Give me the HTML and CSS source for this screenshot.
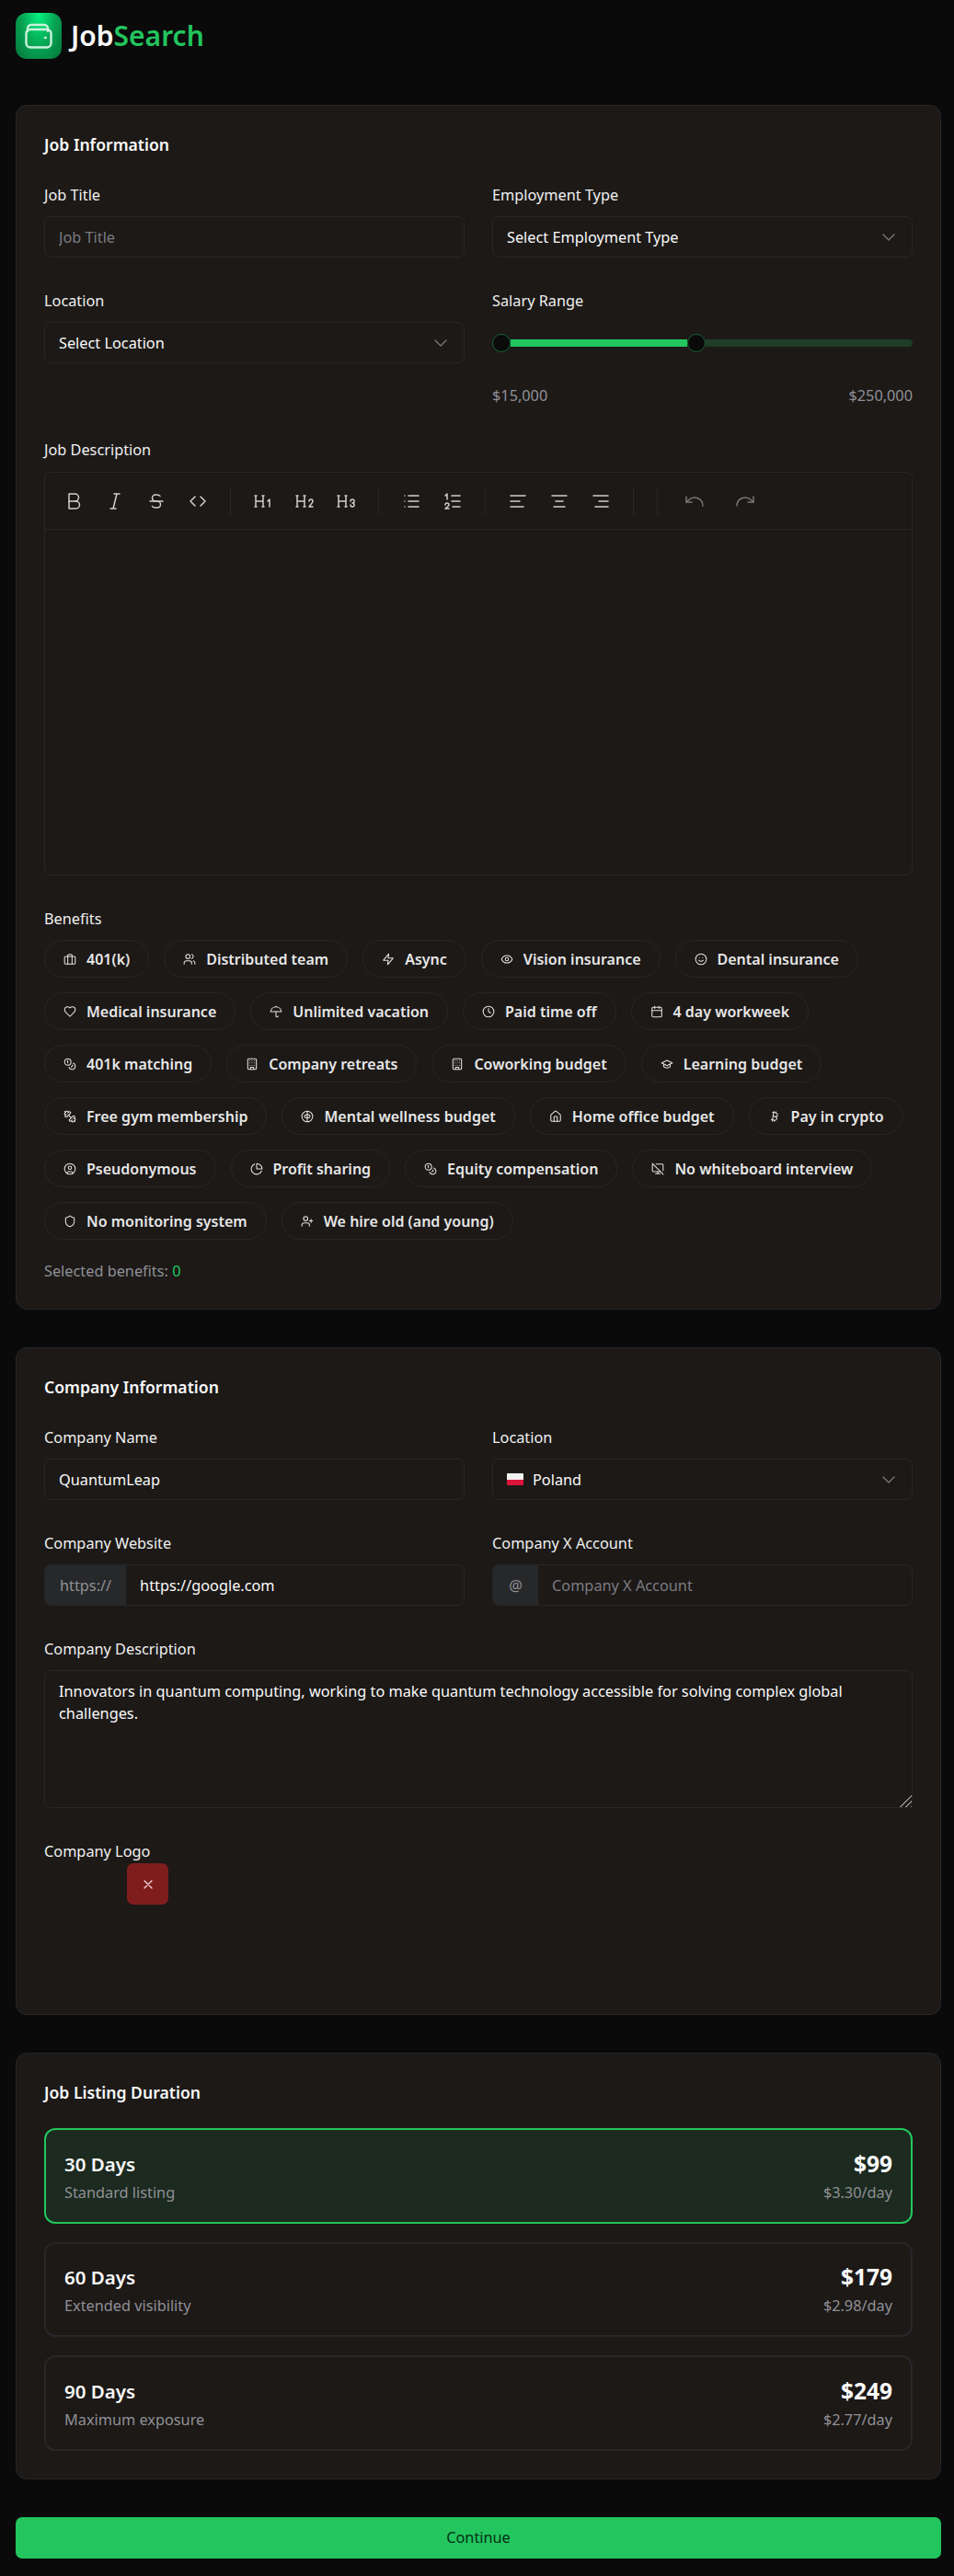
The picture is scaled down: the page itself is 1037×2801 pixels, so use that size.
FILE: index.html
```html
<!DOCTYPE html>
<html>
<head>
    <meta charset="UTF-8">
    <title>JobSearch - Post a job</title>
    <link rel="stylesheet" href="styles.css">
</head>
<body>
    <svg class="sprite" xmlns="http://www.w3.org/2000/svg">
        <symbol id="i-briefcase" viewBox="0 0 24 24"><rect x="2" y="7" width="20" height="14" rx="2"/><path d="M16 21V5a2 2 0 0 0-2-2h-4a2 2 0 0 0-2 2v16"/></symbol>
        <symbol id="i-users" viewBox="0 0 24 24"><path d="M16 21v-2a4 4 0 0 0-4-4H6a4 4 0 0 0-4 4v2"/><circle cx="9" cy="7" r="4"/><path d="M22 21v-2a4 4 0 0 0-3-3.87"/><path d="M16 3.13a4 4 0 0 1 0 7.75"/></symbol>
        <symbol id="i-zap" viewBox="0 0 24 24"><path d="M13 2 3 14h9l-1 8 10-12h-9z"/></symbol>
        <symbol id="i-eye" viewBox="0 0 24 24"><path d="M2 12s3-7 10-7 10 7 10 7-3 7-10 7-10-7-10-7Z"/><circle cx="12" cy="12" r="3"/></symbol>
        <symbol id="i-smile" viewBox="0 0 24 24"><circle cx="12" cy="12" r="10"/><path d="M8 14s1.5 2 4 2 4-2 4-2"/><path d="M9 9h.01M15 9h.01"/></symbol>
        <symbol id="i-heart" viewBox="0 0 24 24"><path d="M19 14c1.49-1.46 3-3.21 3-5.5A5.5 5.5 0 0 0 16.5 3c-1.76 0-3 .5-4.5 2-1.5-1.5-2.74-2-4.5-2A5.5 5.5 0 0 0 2 8.5c0 2.3 1.5 4.05 3 5.5l7 7Z"/></symbol>
        <symbol id="i-umbrella" viewBox="0 0 24 24"><path d="M22 12a10.06 10.06 1 0 0-20 0Z"/><path d="M12 12v8a2 2 0 0 0 4 0"/><path d="M12 2v1"/></symbol>
        <symbol id="i-clock" viewBox="0 0 24 24"><circle cx="12" cy="12" r="10"/><path d="M12 6v6l4 2"/></symbol>
        <symbol id="i-calendar" viewBox="0 0 24 24"><rect x="3" y="4" width="18" height="18" rx="2"/><path d="M16 2v4M8 2v4M3 10h18"/></symbol>
        <symbol id="i-coins" viewBox="0 0 24 24"><circle cx="8" cy="8" r="6"/><path d="M18.09 10.37A6 6 0 1 1 10.34 18"/><path d="M7 6h1v4"/><path d="m16.71 13.88.7.71-2.82 2.82"/></symbol>
        <symbol id="i-building" viewBox="0 0 24 24"><rect x="4" y="2" width="16" height="20" rx="2"/><path d="M9 22v-4h6v4"/><path d="M8 6h.01M12 6h.01M16 6h.01M8 10h.01M12 10h.01M16 10h.01M8 14h.01M12 14h.01M16 14h.01"/></symbol>
        <symbol id="i-cap" viewBox="0 0 24 24"><path d="M22 10 12 5 2 10l10 5z"/><path d="M6 12v5c3 3 9 3 12 0v-5"/></symbol>
        <symbol id="i-dumbbell" viewBox="0 0 24 24"><path d="M14.4 14.4 9.6 9.6"/><path d="M18.657 21.485a2 2 0 1 1-2.829-2.828l-1.767 1.768a2 2 0 1 1-2.829-2.829l6.364-6.364a2 2 0 1 1 2.829 2.829l-1.768 1.767a2 2 0 1 1 2.828 2.829z"/><path d="m21.5 21.5-1.4-1.4"/><path d="M3.9 3.9 2.5 2.5"/><path d="M6.404 12.768a2 2 0 1 1-2.829-2.829l1.768-1.767a2 2 0 1 1-2.828-2.829l2.828-2.828a2 2 0 1 1 2.829 2.828l1.767-1.768a2 2 0 1 1 2.829 2.829z"/></symbol>
        <symbol id="i-brain" viewBox="0 0 24 24"><circle cx="12" cy="12" r="10"/><path d="M12 2v20"/><path d="M12 9c-3-1-5 1-5 3s2 3 5 2"/><path d="M12 9c3-1 5 1 5 3s-2 3-5 2"/></symbol>
        <symbol id="i-home" viewBox="0 0 24 24"><path d="M15 21v-8a1 1 0 0 0-1-1h-4a1 1 0 0 0-1 1v8"/><path d="M3 10a2 2 0 0 1 .709-1.528l7-5.999a2 2 0 0 1 2.582 0l7 5.999A2 2 0 0 1 21 10v9a2 2 0 0 1-2 2H5a2 2 0 0 1-2-2z"/></symbol>
        <symbol id="i-bitcoin" viewBox="0 0 24 24"><path d="M11.767 19.089c4.924.868 6.14-6.025 1.216-6.894m-1.216 6.894L5.86 18.047m5.908 1.042-.347 1.97m1.563-8.864c4.924.869 6.14-6.025 1.215-6.893m-1.215 6.893-3.94-.694m5.155-6.2L8.29 4.26m5.908 1.042.348-1.97M7.48 20.364l3.126-17.727"/></symbol>
        <symbol id="i-user-circle" viewBox="0 0 24 24"><circle cx="12" cy="12" r="10"/><circle cx="12" cy="10" r="3"/><path d="M7 20.662V19a2 2 0 0 1 2-2h6a2 2 0 0 1 2 2v1.662"/></symbol>
        <symbol id="i-pie" viewBox="0 0 24 24"><path d="M21.21 15.89A10 10 0 1 1 8 2.83"/><path d="M22 12A10 10 0 0 0 12 2v10z"/></symbol>
        <symbol id="i-monitor-off" viewBox="0 0 24 24"><path d="M17 17H4a2 2 0 0 1-2-2V5c0-1.5 1-2 1-2"/><path d="M22 15V5a2 2 0 0 0-2-2H9"/><path d="M8 21h8M12 17v4"/><path d="m2 2 20 20"/></symbol>
        <symbol id="i-shield" viewBox="0 0 24 24"><path d="M20 13c0 5-3.500 7.500-7.660 8.950a1 1 0 0 1-.67-.01C7.500 20.500 4 18 4 13V6a1 1 0 0 1 1-1c2 0 4.500-1.200 6.240-2.720a1.170 1.170 0 0 1 1.520 0C14.510 3.810 17 5 19 5a1 1 0 0 1 1 1z"/></symbol>
        <symbol id="i-user-plus" viewBox="0 0 24 24"><path d="M16 21v-2a4 4 0 0 0-4-4H6a4 4 0 0 0-4 4v2"/><circle cx="9" cy="7" r="4"/><path d="M19 8v6M22 11h-6"/></symbol>
        <symbol id="i-chevron" viewBox="0 0 24 24"><path d="m6 9 6 6 6-6"/></symbol>
    </svg>

    <header class="brand">
        <div class="brand-logo">
            <svg viewBox="0 0 30 28" fill="none" stroke="currentColor" stroke-width="2.4" stroke-linecap="round" stroke-linejoin="round"><path d="M3 9V6a4 4 0 0 1 4-4h14a4 4 0 0 1 4 4v3"/><rect x="1.500" y="7" width="27" height="19.500" rx="4.500"/><path d="M22 16h.8"/></svg>
        </div>
        <div class="brand-name">Job<span class="brand-accent">Search</span></div>
    </header>

    <section class="card">
        <h2 class="card-title">Job Information</h2>
        <div class="form-grid">
            <div class="field">
                <label class="field-label">Job Title</label>
                <input class="input" type="text" placeholder="Job Title">
            </div>
            <div class="field">
                <label class="field-label">Employment Type</label>
                <div class="select">
                    <span>Select Employment Type</span>
                    <svg class="chevron"><use href="#i-chevron"/></svg>
                </div>
            </div>
            <div class="field">
                <label class="field-label">Location</label>
                <div class="select">
                    <span>Select Location</span>
                    <svg class="chevron"><use href="#i-chevron"/></svg>
                </div>
            </div>
            <div class="field">
                <label class="field-label">Salary Range</label>
                <div class="slider">
                    <span class="slider-thumb"></span>
                    <span class="slider-fill"></span>
                    <span class="slider-thumb"></span>
                    <span class="slider-rest"></span>
                </div>
                <div class="slider-values">
                    <span>$15,000</span>
                    <span>$250,000</span>
                </div>
            </div>
            <div class="field field-wide">
                <label class="field-label field-label-editor">Job Description</label>
                <div class="editor">
                    <div class="toolbar">
                        <div class="tool-group">
                            <svg class="tool" viewBox="0 0 24 24"><path d="M7 4h6.500a4 4 0 0 1 0 8H7z"/><path d="M13.500 12h1a4 4 0 0 1 0 8H7v-8"/></svg>
                            <svg class="tool" viewBox="0 0 24 24"><path d="M11 4h6M7 20h6M14 4l-4 16"/></svg>
                            <svg class="tool" viewBox="0 0 24 24"><path d="M5 12h14"/><path d="M16 6.500A4 2 0 0 0 12 5h-1a3.500 3.500 0 0 0 0 7h2a3.500 3.500 0 0 1 0 7h-1.500a4 2 0 0 1-4-1.500"/></svg>
                            <svg class="tool" viewBox="0 0 24 24"><path d="m9 7-5 5 5 5M15 7l5 5-5 5"/></svg>
                        </div>
                        <div class="tool-group">
                            <svg class="tool" viewBox="0 0 24 24"><path d="M19 18v-8l-2 2M4 6v12M12 6v12M11 18h2M3 18h2M4 12h8M3 6h2M11 6h2"/></svg>
                            <svg class="tool" viewBox="0 0 24 24"><path d="M17 12a2 2 0 1 1 4 0c0 .591-.417 1.318-.816 1.858L17 18h4M4 6v12M12 6v12M11 18h2M3 18h2M4 12h8M3 6h2M11 6h2"/></svg>
                            <svg class="tool" viewBox="0 0 24 24"><path d="M19 14a2 2 0 1 0-2-2M17 16a2 2 0 1 0 2-2M4 6v12M12 6v12M11 18h2M3 18h2M4 12h8M3 6h2M11 6h2"/></svg>
                        </div>
                        <div class="tool-group">
                            <svg class="tool" viewBox="0 0 24 24"><path d="M9 6h11M9 12h11M9 18h11M5 6v.01M5 12v.01M5 18v.01"/></svg>
                            <svg class="tool" viewBox="0 0 24 24"><path d="M11 6h9M11 12h9M12 18h8M4 16a2 2 0 1 1 4 0c0 .591-.5 1-1 1.500L4 20h4M6 10V4L4 6"/></svg>
                        </div>
                        <div class="tool-group">
                            <svg class="tool" viewBox="0 0 24 24"><path d="M4 6h16M4 12h10M4 18h14"/></svg>
                            <svg class="tool" viewBox="0 0 24 24"><path d="M4 6h16M8 12h8M6 18h12"/></svg>
                            <svg class="tool" viewBox="0 0 24 24"><path d="M4 6h16M10 12h10M6 18h14"/></svg>
                        </div>
                        <div class="tool-group tool-group-empty"></div>
                        <div class="tool-group tool-group-history">
                            <svg class="tool tool-muted" viewBox="0 0 24 24"><path d="M3 7v6h6"/><path d="M21 17a9 9 0 0 0-15-6.700L3 13"/></svg>
                            <svg class="tool tool-muted" viewBox="0 0 24 24"><path d="M21 7v6h-6"/><path d="M3 17a9 9 0 0 1 15-6.700L21 13"/></svg>
                        </div>
                    </div>
                    <div class="editor-body"></div>
                </div>
            </div>
            <div class="field field-wide">
                <label class="field-label">Benefits</label>
                <div class="chips">
                    <div class="chip"><svg><use href="#i-briefcase"/></svg>401(k)</div>
                    <div class="chip"><svg><use href="#i-users"/></svg>Distributed team</div>
                    <div class="chip"><svg><use href="#i-zap"/></svg>Async</div>
                    <div class="chip"><svg><use href="#i-eye"/></svg>Vision insurance</div>
                    <div class="chip"><svg><use href="#i-smile"/></svg>Dental insurance</div>
                    <div class="chip"><svg><use href="#i-heart"/></svg>Medical insurance</div>
                    <div class="chip"><svg><use href="#i-umbrella"/></svg>Unlimited vacation</div>
                    <div class="chip"><svg><use href="#i-clock"/></svg>Paid time off</div>
                    <div class="chip"><svg><use href="#i-calendar"/></svg>4 day workweek</div>
                    <div class="chip"><svg><use href="#i-coins"/></svg>401k matching</div>
                    <div class="chip"><svg><use href="#i-building"/></svg>Company retreats</div>
                    <div class="chip"><svg><use href="#i-building"/></svg>Coworking budget</div>
                    <div class="chip"><svg><use href="#i-cap"/></svg>Learning budget</div>
                    <div class="chip"><svg><use href="#i-dumbbell"/></svg>Free gym membership</div>
                    <div class="chip"><svg><use href="#i-brain"/></svg>Mental wellness budget</div>
                    <div class="chip"><svg><use href="#i-home"/></svg>Home office budget</div>
                    <div class="chip"><svg><use href="#i-bitcoin"/></svg>Pay in crypto</div>
                    <div class="chip"><svg><use href="#i-user-circle"/></svg>Pseudonymous</div>
                    <div class="chip"><svg><use href="#i-pie"/></svg>Profit sharing</div>
                    <div class="chip"><svg><use href="#i-coins"/></svg>Equity compensation</div>
                    <div class="chip"><svg><use href="#i-monitor-off"/></svg>No whiteboard interview</div>
                    <div class="chip"><svg><use href="#i-shield"/></svg>No monitoring system</div>
                    <div class="chip"><svg><use href="#i-user-plus"/></svg>We hire old (and young)</div>
                </div>
                <p class="chips-count">Selected benefits: <span class="chips-count-value">0</span></p>
            </div>
        </div>
    </section>

    <section class="card">
        <h2 class="card-title">Company Information</h2>
        <div class="form-grid">
            <div class="field">
                <label class="field-label">Company Name</label>
                <input class="input" type="text" value="QuantumLeap">
            </div>
            <div class="field">
                <label class="field-label">Location</label>
                <div class="select">
                    <span class="select-flag">
                        <span class="flag"><span class="flag-white"></span><span class="flag-red"></span></span>
                        Poland
                    </span>
                    <svg class="chevron"><use href="#i-chevron"/></svg>
                </div>
            </div>
            <div class="field">
                <label class="field-label">Company Website</label>
                <div class="input-group">
                    <span class="addon">https://</span>
                    <input class="input-bare" type="text" value="https://google.com">
                </div>
            </div>
            <div class="field">
                <label class="field-label">Company X Account</label>
                <div class="input-group">
                    <span class="addon">@</span>
                    <input class="input-bare" type="text" placeholder="Company X Account">
                </div>
            </div>
            <div class="field field-wide">
                <label class="field-label">Company Description</label>
                <textarea class="textarea">Innovators in quantum computing, working to make quantum technology accessible for solving complex global challenges.</textarea>
            </div>
            <div class="field field-wide">
                <label class="field-label field-label-tight">Company Logo</label>
                <div class="logo-preview">
                    <button class="logo-remove" type="button">
                        <svg viewBox="0 0 24 24"><path d="M18 6 6 18M6 6l12 12"/></svg>
                    </button>
                </div>
            </div>
        </div>
    </section>

    <section class="card">
        <h2 class="card-title card-title-tight">Job Listing Duration</h2>
        <div class="plans">
            <div class="plan plan-active">
                <div>
                    <div class="plan-name">30 Days</div>
                    <div class="plan-note">Standard listing</div>
                </div>
                <div class="plan-price">
                    <div class="plan-amount">$99</div>
                    <div class="plan-note">$3.30/day</div>
                </div>
            </div>
            <div class="plan">
                <div>
                    <div class="plan-name">60 Days</div>
                    <div class="plan-note">Extended visibility</div>
                </div>
                <div class="plan-price">
                    <div class="plan-amount">$179</div>
                    <div class="plan-note">$2.98/day</div>
                </div>
            </div>
            <div class="plan">
                <div>
                    <div class="plan-name">90 Days</div>
                    <div class="plan-note">Maximum exposure</div>
                </div>
                <div class="plan-price">
                    <div class="plan-amount">$249</div>
                    <div class="plan-note">$2.77/day</div>
                </div>
            </div>
        </div>
    </section>

    <button class="continue" type="button">Continue</button>
</body>
</html>
```

FILE: styles.css
```css
* {
  box-sizing: border-box;
}

html {
  color-scheme: dark;
}

body {
  margin: 0;
  padding: 14px 14px 19px 17px;
  background-color: #0a0a0a;
  color: #fafafa;
  font-family: "Noto Sans", sans-serif;
  font-size: 16.3px;
  line-height: 24px;
}

.sprite {
  display: none;
}

/* header */
.brand {
  display: flex;
  align-items: center;
  gap: 10px;
  margin-bottom: 50px;
}

.brand-logo {
  display: flex;
  align-items: center;
  justify-content: center;
  width: 50px;
  height: 50px;
  border-radius: 12px;
  background: radial-gradient(ellipse at 50% 0%, #05f582 0%, #07a654 50%, #04753b 100%);
  color: #c9f2dc;
}

.brand-logo svg {
  width: 30px;
  height: 28px;
}

.brand-name {
  font-size: 30px;
  font-weight: 600;
  line-height: 36px;
}

.brand-accent {
  color: #22c55e;
}

/* cards */
.card {
  margin-bottom: 41px;
  padding: 30px;
  background-color: #1c1917;
  border: 1px solid #27272a;
  border-radius: 12px;
}

.card-title {
  margin: 0 0 31px;
  font-size: 17.6px;
  font-weight: 600;
  line-height: 24px;
}

.card-title-tight {
  margin-bottom: 27px;
}

.form-grid {
  display: grid;
  grid-template-columns: 1fr 1fr;
  gap: 35px 30px;
}

.field-wide {
  grid-column: 1 / -1;
}

.field-label {
  display: block;
  margin-bottom: 11px;
  color: #f0f0f0;
}

.field-label-editor {
  margin-bottom: 12px;
}

.field-label-tight {
  margin-bottom: 1px;
}

/* inputs */
.input,
.select,
.input-group,
.textarea {
  width: 100%;
  height: 45px;
  background-color: #1c1917;
  border: 1px solid #27272a;
  border-radius: 7px;
  color: #fafafa;
  font-family: inherit;
  font-size: inherit;
}

.input {
  padding: 0 15px;
  outline: none;
}

.input::placeholder,
.input-bare::placeholder {
  color: #7b7b82;
  opacity: 1;
}

.select {
  display: flex;
  align-items: center;
  justify-content: space-between;
  padding: 0 13px 0 15px;
}

.select-flag {
  display: flex;
  align-items: center;
  gap: 10px;
}

.flag {
  display: flex;
  flex-direction: column;
  width: 18px;
  height: 13px;
  border-radius: 1px;
  overflow: hidden;
}

.flag-white {
  flex: 1;
  background-color: #f1f1f1;
}

.flag-red {
  flex: 1;
  background-color: #dc143c;
}

.chevron {
  width: 24px;
  height: 24px;
  fill: none;
  stroke: #77777c;
  stroke-width: 1.4;
  stroke-linecap: round;
  stroke-linejoin: round;
}

.input-group {
  display: flex;
  overflow: hidden;
}

.addon {
  display: flex;
  align-items: center;
  justify-content: center;
  min-width: 49px;
  padding: 0 16px;
  background-color: #27282a;
  color: #909096;
}

.input-bare {
  flex: 1;
  min-width: 0;
  padding: 0 15px;
  background: transparent;
  border: none;
  outline: none;
  color: #fafafa;
  font-family: inherit;
  font-size: inherit;
}

.textarea {
  display: block;
  height: 150px;
  padding: 10px 15px;
  line-height: 24px;
  outline: none;
}

.textarea::-webkit-resizer {
  background:
    linear-gradient(135deg, #1c1917 50%, transparent 50%),
    repeating-linear-gradient(135deg, #8a8a8a 0 1px, transparent 1px 4px);
}

/* salary slider */
.slider {
  display: flex;
  align-items: center;
  height: 20px;
  margin-top: 24px;
}

.slider-thumb {
  flex: none;
  width: 20px;
  height: 20px;
  background-color: #0a0a0a;
  border: 1px solid #166534;
  border-radius: 50%;
}

.slider-fill {
  width: 192px;
  height: 8px;
  background-color: #22c55e;
}

.slider-rest {
  flex: 1;
  height: 8px;
  background-color: #1f3d28;
  border-radius: 0 4px 4px 0;
}

.slider-values {
  display: flex;
  justify-content: space-between;
  margin-top: 35px;
  color: #909096;
}

/* editor */
.editor {
  height: 439px;
  border: 1px solid #27272a;
  border-radius: 7px;
}

.toolbar {
  display: flex;
  align-items: center;
  height: 62px;
  padding: 0 0 0 19px;
  border-bottom: 1px solid #27272a;
}

.tool-group {
  display: flex;
  align-items: center;
  height: 30px;
  padding-right: 23px;
  margin-right: 23px;
  gap: 21px;
  border-right: 1px solid #27272a;
}

.tool-group-empty {
  padding: 0;
  margin-left: 2px;
  margin-right: 28px;
}

.tool-group-history {
  gap: 31px;
  border-right: none;
}

.tool {
  flex: none;
  width: 24px;
  height: 24px;
  fill: none;
  stroke: #d0d0d0;
  stroke-width: 1.5;
  stroke-linecap: round;
  stroke-linejoin: round;
}

.tool-muted {
  stroke: #77777a;
}

/* benefit chips */
.chips {
  display: flex;
  flex-wrap: wrap;
  gap: 16px;
}

.chip {
  display: flex;
  align-items: center;
  gap: 11px;
  height: 41px;
  padding: 0 20px;
  border: 1px solid #27272a;
  border-radius: 21px;
  font-size: 16px;
  font-weight: 600;
  color: #e7e7e7;
}

.chip svg {
  flex: none;
  width: 14px;
  height: 14px;
  fill: none;
  stroke: #e4e4e4;
  stroke-width: 1.8;
  stroke-linecap: round;
  stroke-linejoin: round;
}

.chips-count {
  margin: 24px 0 0;
  color: #909096;
  line-height: 21px;
}

.chips-count-value {
  color: #22c55e;
}

/* logo */
.logo-preview {
  display: flex;
  justify-content: flex-end;
  align-items: flex-start;
  width: 135px;
  height: 134px;
}

.logo-remove {
  display: flex;
  align-items: center;
  justify-content: center;
  width: 45px;
  height: 45px;
  padding: 0;
  background-color: #7f1d1d;
  border: none;
  border-radius: 7px;
}

.logo-remove svg {
  width: 16px;
  height: 16px;
  fill: none;
  stroke: #f3dcdc;
  stroke-width: 1.8;
  stroke-linecap: round;
}

/* plans */
.plans {
  display: flex;
  flex-direction: column;
  gap: 20px;
}

.plan {
  display: flex;
  align-items: center;
  justify-content: space-between;
  height: 103.5px;
  padding: 0 20px;
  border: 2px solid #27272a;
  border-radius: 12px;
}

.plan-active {
  background-color: #1c2a1f;
  border-color: #22c55e;
}

.plan-name {
  font-size: 20.5px;
  font-weight: 600;
  line-height: 34px;
}

.plan-amount {
  font-size: 24.5px;
  font-weight: 700;
  line-height: 34px;
}

.plan-note {
  margin-top: 2px;
  color: #909096;
}

.plan-price {
  text-align: right;
}

/* footer button */
.continue {
  display: block;
  width: 100%;
  height: 45px;
  background-color: #22c55e;
  border: none;
  border-radius: 7px;
  color: #052e16;
  font-family: inherit;
  font-size: inherit;
}
```
